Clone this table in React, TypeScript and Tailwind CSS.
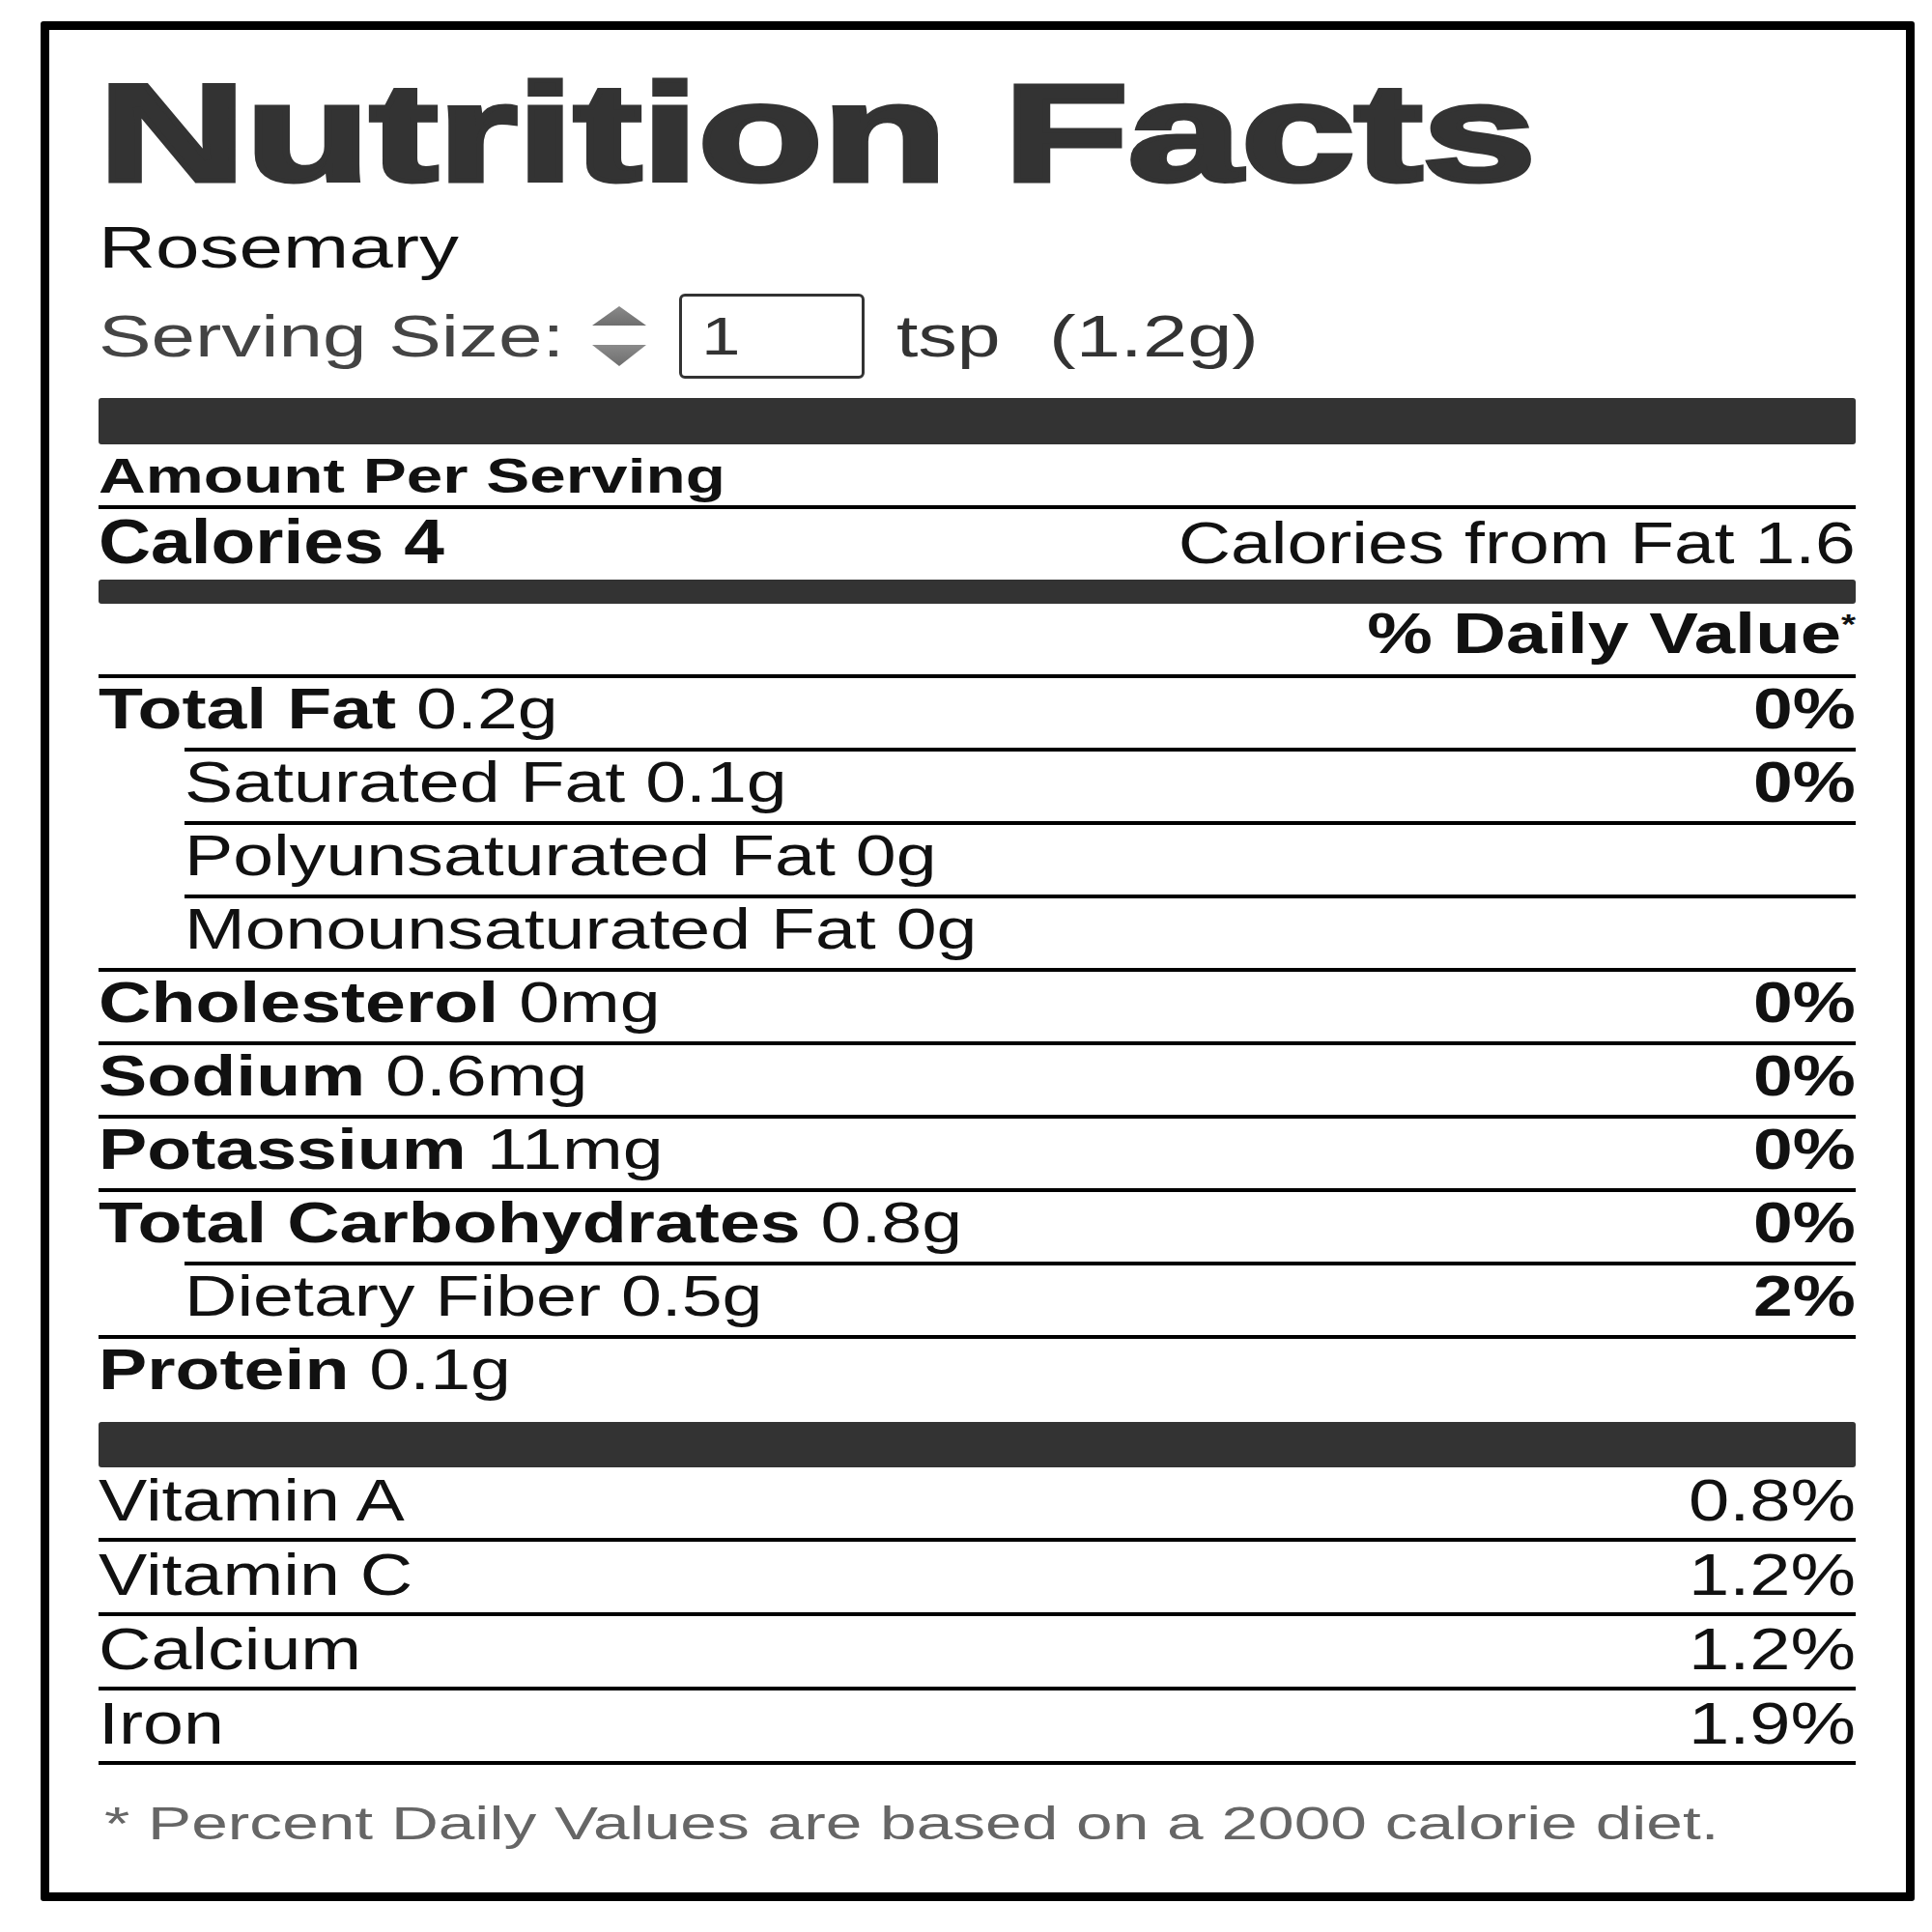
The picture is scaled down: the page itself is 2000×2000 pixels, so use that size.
import type { ReactNode } from "react";

const font = "[font-family:'Liberation_Sans',Arial,Helvetica,sans-serif]";

// the label is drawn wider than its type: each text run is stretched on x
function Stretch({
  sx,
  right = false,
  className = "",
  children,
}: {
  sx: string;
  right?: boolean;
  className?: string;
  children: ReactNode;
}) {
  return (
    <span
      className={`inline-block whitespace-nowrap ${right ? "origin-right" : "origin-left"} ${sx} ${className}`}
    >
      {children}
    </span>
  );
}

interface Nutrient {
  label: string;
  amount: string;
  dv?: string;
  bold?: boolean;
  indent?: boolean;
}

const nutrients: Nutrient[] = [
  { label: "Total Fat", amount: "0.2g", dv: "0%", bold: true },
  { label: "Saturated Fat", amount: "0.1g", dv: "0%", indent: true },
  { label: "Polyunsaturated Fat", amount: "0g", indent: true },
  { label: "Monounsaturated Fat", amount: "0g", indent: true },
  { label: "Cholesterol", amount: "0mg", dv: "0%", bold: true },
  { label: "Sodium", amount: "0.6mg", dv: "0%", bold: true },
  { label: "Potassium", amount: "11mg", dv: "0%", bold: true },
  { label: "Total Carbohydrates", amount: "0.8g", dv: "0%", bold: true },
  { label: "Dietary Fiber", amount: "0.5g", dv: "2%", indent: true },
];

const vitamins = [
  { label: "Vitamin A", value: "0.8%" },
  { label: "Vitamin C", value: "1.2%" },
  { label: "Calcium", value: "1.2%" },
  { label: "Iron", value: "1.9%" },
];

function NutrientRow({ n, last = false }: { n: Nutrient; last?: boolean }) {
  return (
    <div
      className={`flex justify-between border-t-4 border-black pt-[2px] text-[60px] leading-[60px] ${
        last ? "pb-[24px]" : "pb-[10px]"
      } ${n.indent ? "ml-[89px]" : ""}`}
    >
      <Stretch sx="scale-x-[1.255]">
        {n.bold ? <span className="font-bold">{n.label}</span> : n.label} {n.amount}
      </Stretch>
      {n.dv && (
        <Stretch right sx="scale-x-[1.22]" className="font-bold">
          {n.dv}
        </Stretch>
      )}
    </div>
  );
}

function Spinner() {
  return (
    <svg width="56" height="62" viewBox="0 0 56 62" className="ml-[31px] shrink-0">
      <defs>
        <linearGradient id="spin" x1="0" y1="0" x2="0" y2="1">
          <stop offset="0" stopColor="#8a8a8a" />
          <stop offset="1" stopColor="#6e6e6e" />
        </linearGradient>
      </defs>
      <polygon points="0,20 28,0 56,20" fill="url(#spin)" />
      <polygon points="0,40 56,40 28,62" fill="url(#spin)" />
    </svg>
  );
}

export default function App() {
  return (
    <div className={`min-h-screen bg-white pt-[22px] pl-[42px] text-[#111] ${font}`}>
      <section className="h-[1946px] w-[1940px] rounded-[3px] border-[9px] border-black bg-white pt-[36px] pr-[52px] pl-[51px]">
        <h1 className="text-[142px] leading-[142px] font-bold text-[#333] [-webkit-text-stroke:5px_#333]">
          <Stretch sx="scale-x-[1.485]">Nutrition Facts</Stretch>
        </h1>

        <div className="mt-[16px] text-[62px] leading-[62px]">
          <Stretch sx="scale-x-[1.32]">Rosemary</Stretch>
        </div>

        <div className="mt-[17px] flex h-[88px] items-center text-[62px] leading-[62px] text-[#444]">
          <span className="w-[480px] shrink-0">
            <Stretch sx="scale-x-[1.32]">Serving Size:</Stretch>
          </span>
          <Spinner />
          <div className="ml-[34px] flex h-[88px] w-[192px] shrink-0 items-center rounded-[6px] border-[3px] border-[#333] pl-[20px] text-[56px] leading-[56px] text-[#333]">
            <Stretch sx="scale-x-[1.3]">1</Stretch>
          </div>
          <span className="ml-[33px] w-[108px] shrink-0 text-[#333]">
            <Stretch sx="scale-x-[1.3]">tsp</Stretch>
          </span>
          <span className="ml-[50px] text-[#333]">
            <Stretch sx="scale-x-[1.34]">(1.2g)</Stretch>
          </span>
        </div>

        <div className="mt-[20px] h-[48px] rounded-[3px] bg-[#333]" />

        <div className="pt-[8px] pb-[5px] text-[50px] leading-[50px] font-bold">
          <Stretch sx="scale-x-[1.35]">Amount Per Serving</Stretch>
        </div>

        <div className="flex items-baseline justify-between border-t-4 border-black pt-[2px] pb-[7px]">
          <Stretch sx="scale-x-[1.17]" className="text-[64px] leading-[64px] font-bold">
            Calories 4
          </Stretch>
          <Stretch right sx="scale-x-[1.211]" className="text-[62px] leading-[62px]">
            Calories from Fat 1.6
          </Stretch>
        </div>

        <div className="h-[25px] rounded-[3px] bg-[#333]" />

        <div className="pt-[2px] pb-[12px] text-right text-[59px] leading-[59px] font-bold">
          <Stretch right sx="scale-x-[1.29]">
            % Daily Value
            <span className="relative top-[4px] align-top text-[30px] leading-none">*</span>
          </Stretch>
        </div>

        {nutrients.map((n) => (
          <NutrientRow key={n.label} n={n} />
        ))}
        <NutrientRow n={{ label: "Protein", amount: "0.1g", bold: true }} last />

        <div className="h-[47px] rounded-[3px] bg-[#333]" />

        {vitamins.map((v) => (
          <div
            key={v.label}
            className="flex justify-between border-b-4 border-black pt-[4px] pb-[8px] text-[61px] leading-[61px]"
          >
            <Stretch sx="scale-x-[1.235]">{v.label}</Stretch>
            <Stretch right sx="scale-x-[1.245]">
              {v.value}
            </Stretch>
          </div>
        ))}

        <p className="mt-[36px] ml-[6px] text-[49px] leading-[49px] text-[#666]">
          <Stretch sx="scale-x-[1.38]">* Percent Daily Values are based on a 2000 calorie diet.</Stretch>
        </p>
      </section>
    </div>
  );
}
